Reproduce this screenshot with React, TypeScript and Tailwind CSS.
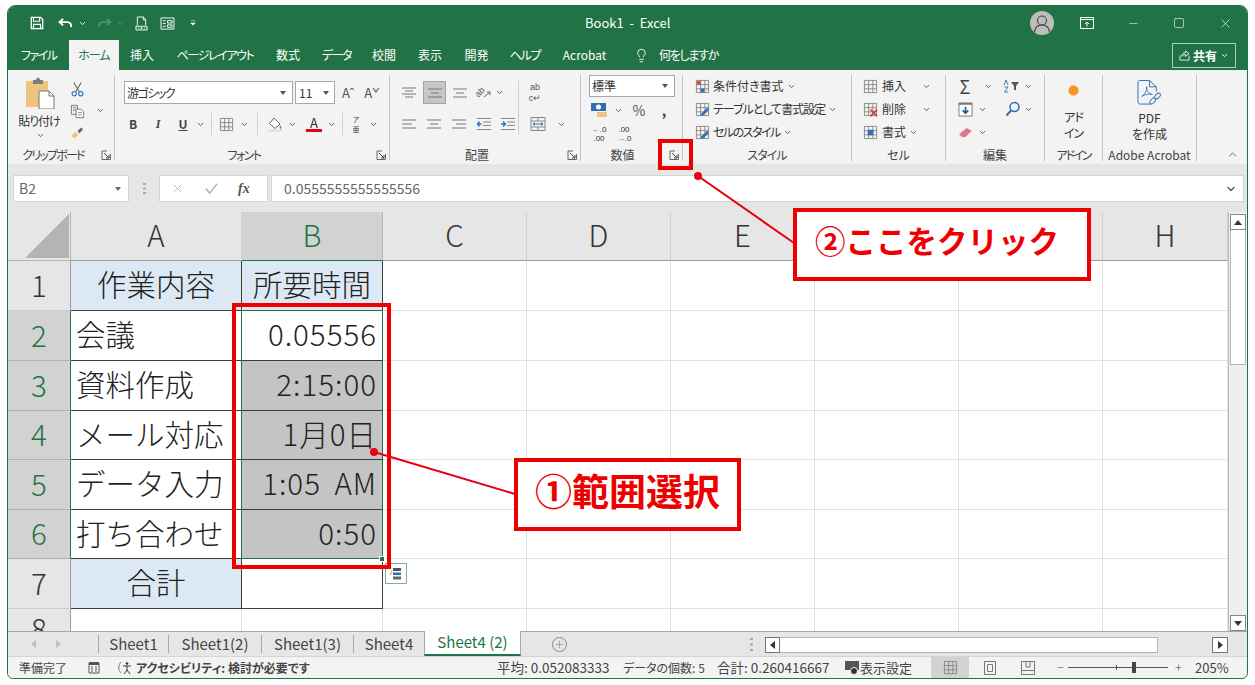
import { ChevronDown, ChevronUp, Lightbulb, Minus, Plus, Square, X } from "lucide-react";
import type { ReactNode } from "react";

function Chev({ className = "text-[#555]" }: { className?: string }) {
  return <ChevronDown className={`w-[9px] h-[9px] shrink-0 ${className}`} strokeWidth={2.5} />;
}

function Launcher() {
  return (
    <svg viewBox="0 0 10 10" className="w-[10px] h-[10px] shrink-0">
      <path d="M9.5 4V9.5H1V1H6" fill="none" stroke="#666" />
      <path d="M3 3L8 8M8 5V8H5" fill="none" stroke="#444" />
    </svg>
  );
}

function Box({ w, children, className = "" }: { w: string; children?: ReactNode; className?: string }) {
  return <div className={`flex items-center justify-center shrink-0 ${w} ${className}`}>{children}</div>;
}

function Sep() {
  return <div className="w-px h-[22px] bg-[#d0d0d0] shrink-0" />;
}

function AlignIcon({ kind, lines = 3 }: { kind: "c" | "l" | "r"; lines?: number }) {
  const ys = lines === 3 ? [3, 7, 11] : [2, 5, 8, 11];
  return (
    <svg viewBox="0 0 16 14" className="w-[16px] h-[14px]">
      {ys.map((y, i) => {
        const short = i % 2 === 1;
        const x1 = kind === "l" ? 1 : short ? 4 : 1;
        const x2 = kind === "r" ? 15 : kind === "l" ? (short ? 11 : 15) : short ? 12 : 15;
        const xa = kind === "r" && short ? 5 : x1;
        return <path key={y} d={`M${xa} ${y}H${x2}`} stroke="#777" strokeWidth="1" />;
      })}
    </svg>
  );
}

function RibbonGroup({ w, label, launcher, children, labelClass = "" }: { w: string; label: string; launcher?: boolean; children: ReactNode; labelClass?: string }) {
  return (
    <div className={`flex flex-col shrink-0 h-[86px] border-r border-[#c4c4c4] ${w}`}>
      <div className="h-[72px] flex">{children}</div>
      <div className="flex-1 flex items-center relative pt-[1px]">
        <span className={`flex-1 text-center text-[12px] text-[#444] leading-none ${labelClass}`}>{label}</span>
        {launcher && (
          <span className="absolute right-[3px] top-[3px]">
            <Launcher />
          </span>
        )}
      </div>
    </div>
  );
}

function TitleBar() {
  return (
    <div className="h-[34px] bg-[#217346] flex items-center text-white relative shrink-0">
      <Box w="w-[21px]" className="ml-[18px]">
        <svg viewBox="0 0 16 16" className="w-[14px] h-[14px]">
          <path d="M1.5 1.5H12L14.5 4V14.5H1.5Z" fill="none" stroke="#fff" strokeWidth="1.5" />
          <path d="M4 1.5V6H11V1.5M4 14.5V9.5H12V14.5" fill="none" stroke="#fff" strokeWidth="1.3" />
        </svg>
      </Box>
      <Box w="w-[20px]" className="ml-[8px]">
        <svg viewBox="0 0 16 14" className="w-[15px] h-[13px]">
          <path d="M5.5 2L1.5 5.5L5.5 9M2 5.5H10C13 5.5 14.5 7.5 14 11" fill="none" stroke="#fff" strokeWidth="2" />
        </svg>
      </Box>
      <Box w="w-[10px]" className="ml-[2px]">
        <Chev className="text-white" />
      </Box>
      <Box w="w-[20px]" className="ml-[7px]">
        <svg viewBox="0 0 16 14" className="w-[15px] h-[13px]">
          <path d="M10.5 2L14.5 5.5L10.5 9M14 5.5H6C3 5.5 1.5 7.5 2 11" fill="none" stroke="#4f9470" strokeWidth="2" />
        </svg>
      </Box>
      <Box w="w-[10px]" className="ml-[1px]">
        <Chev className="text-[#4f9470]" />
      </Box>
      <Box w="w-[16px]" className="ml-[8px]">
        <svg viewBox="0 0 14 16" className="w-[13px] h-[15px]">
          <path d="M2.5 10V1H9L11.5 3.5V10M9 1V4H11.5" fill="none" stroke="#fff" />
          <path d="M1 11H13V15H1Z" fill="none" stroke="#fff" />
          <circle cx="7" cy="13" r="1" fill="#fff" />
          <path d="M3 13H4.5M9.5 13H11" stroke="#fff" />
        </svg>
      </Box>
      <Box w="w-[16px]" className="ml-[10px]">
        <svg viewBox="0 0 16 14" className="w-[15px] h-[13px]">
          <path d="M1 1H15V13H1Z" fill="none" stroke="#fff" />
          <path d="M3 4H6M3 7H6M3 10H6M8 4H13V6.5H8ZM8 8.5H13V11H8Z" fill="none" stroke="#fff" />
        </svg>
      </Box>
      <Box w="w-[8px]" className="ml-[14px]">
        <svg viewBox="0 0 8 8" className="w-[6px] h-[6px]">
          <path d="M1 1H7M1 4H7L4 7Z" fill="#fff" stroke="#fff" strokeWidth="0.7" />
        </svg>
      </Box>
      <span className="absolute left-[577px] top-[10px] text-[13px] leading-none whitespace-pre">Book1  -  Excel</span>
      <div className="ml-auto flex items-center mr-[14px]">
        <div className="w-[24px] h-[24px] rounded-full bg-[#bdbdbd] flex items-center justify-center overflow-hidden">
          <svg viewBox="0 0 24 24" className="w-[24px] h-[24px]">
            <circle cx="12" cy="9.5" r="4.5" fill="none" stroke="#444" strokeWidth="1.1" />
            <path d="M4.5 21C5 16.5 8 14 12 14S19 16.5 19.5 21" fill="none" stroke="#444" strokeWidth="1.1" />
          </svg>
        </div>
        <Box w="w-[16px]" className="ml-[25px]">
          <svg viewBox="0 0 14 12" className="w-[14px] h-[12px]">
            <path d="M0.5 0.5H13.5V11.5H0.5ZM0.5 2.5H13.5" fill="none" stroke="#fff" />
            <path d="M7 9.5V5M5 7L7 5L9 7" fill="none" stroke="#fff" />
          </svg>
        </Box>
        <Box w="w-[16px]" className="ml-[30px]">
          <Minus className="w-[13px] h-[13px]" strokeWidth={1} />
        </Box>
        <Box w="w-[16px]" className="ml-[30px]">
          <Square className="w-[12px] h-[12px]" strokeWidth={1.2} />
        </Box>
        <Box w="w-[16px]" className="ml-[30px]">
          <X className="w-[15px] h-[15px]" strokeWidth={1} />
        </Box>
      </div>
    </div>
  );
}

function TabsBar() {
  const tabs = [
    ["挿入", "ml-[11px] w-[24px]"],
    ["ページレイアウト", "ml-[22px] w-[78px] tracking-[-1.4px]"],
    ["数式", "ml-[22px] w-[24px]"],
    ["データ", "ml-[22px] w-[29px] tracking-[-1.5px]"],
    ["校閲", "ml-[21px] w-[24px]"],
    ["表示", "ml-[22px] w-[24px]"],
    ["開発", "ml-[22px] w-[25px]"],
    ["ヘルプ", "ml-[21px] w-[30px] tracking-[-1.2px]"],
    ["Acrobat", "ml-[22px] w-[45px]"],
  ];
  return (
    <div className="h-[30px] bg-[#217346] flex items-stretch text-white text-[12px] shrink-0">
      <span className="ml-[13px] w-[34px] flex items-center whitespace-nowrap tracking-[-1.5px]">ファイル</span>
      <span className="ml-[14px] w-[50px] bg-[#f3f3f3] text-[#217346] flex items-center justify-center whitespace-nowrap tracking-[-1px]">ホーム</span>
      {tabs.map(([t, c]) => (
        <span key={t} className={`${c} flex items-center justify-center whitespace-nowrap`}>
          {t}
        </span>
      ))}
      <Box w="w-[16px]" className="ml-[26px]">
        <Lightbulb className="w-[15px] h-[15px]" strokeWidth={1.4} />
      </Box>
      <span className="ml-[10px] flex items-center whitespace-nowrap tracking-[-1.3px]">何をしますか</span>
      <div className="ml-auto mr-[11px] mt-[3px] mb-[2px] w-[64px] border border-[#a9cdb9] flex items-center justify-center gap-[3px]">
        <svg viewBox="0 0 12 12" className="w-[11px] h-[11px]">
          <path d="M1 6V11H11V6M3 7C3 4 5 3 7 3V1L11 4L7 7V5C5 5 4 6 3 7Z" fill="none" stroke="#fff" strokeWidth="0.9" />
        </svg>
        <span className="text-[12px] font-bold">共有</span>
        <Chev className="text-white" />
      </div>
    </div>
  );
}

function SmallGrid({ children }: { children?: ReactNode }) {
  return (
    <svg viewBox="0 0 16 16" className="w-[15px] h-[15px]">
      <path d="M1.5 1.5H14.5V14.5H1.5ZM1.5 6H14.5M1.5 10.5H14.5M6 1.5V14.5M10.5 1.5V14.5" fill="none" stroke="#888" />
      {children}
    </svg>
  );
}

function Ribbon() {
  return (
    <div className="h-[94px] bg-[#f3f3f3] flex pt-[5px] text-[#333] shrink-0">
      <RibbonGroup w="w-[107px]" label="クリップボード" launcher labelClass="pr-[16px] tracking-[-1.8px]">
        <div className="w-[62px] flex flex-col items-center pt-[2px] pl-[2px]">
          <svg viewBox="0 0 30 32" className="w-[30px] h-[32px]">
            <path d="M1 4H23V30H1Z" fill="#eec57c" />
            <path d="M8 3H11C11 0 15 0 15 3H18V7H8Z" fill="#7d7d7d" />
            <path d="M14 14H24L29 19V32H14Z" fill="#fff" stroke="#777" />
            <path d="M24 14V19H29" fill="none" stroke="#777" />
          </svg>
          <span className="text-[12px] mt-[6px] leading-none whitespace-nowrap tracking-[-1px] mr-[2px]">貼り付け</span>
          <Chev className="mt-[4px] text-[#555]" />
        </div>
        <div className="w-[15px] flex flex-col items-center gap-[7px] pt-[6px]">
          <svg viewBox="0 0 16 16" className="w-[15px] h-[16px]">
            <path d="M4 1L10 11M12 1L6 11" stroke="#666" strokeWidth="1.2" fill="none" />
            <circle cx="4.5" cy="13" r="2.3" fill="none" stroke="#2f6fb3" strokeWidth="1.2" />
            <circle cx="11.5" cy="13" r="2.3" fill="none" stroke="#2f6fb3" strokeWidth="1.2" />
          </svg>
          <svg viewBox="0 0 16 16" className="w-[15px] h-[15px]">
            <path d="M1.5 1.5H8V11H1.5ZM3 4H6.5M3 6.5H6.5" fill="none" stroke="#777" />
            <path d="M6.5 5.5H11.5L14.5 8V14.5H6.5Z" fill="#fff" stroke="#777" />
            <path d="M8.5 9H12.5M8.5 11.5H12.5" stroke="#888" />
          </svg>
          <svg viewBox="0 0 16 14" className="w-[15px] h-[13px]">
            <path d="M1 11L6 6L9 10L5 13Z" fill="#eec57c" />
            <path d="M8 5L12 1.5L14 3.5L10 8Z" fill="#666" />
          </svg>
        </div>
        <div className="pt-[31px] ml-[11px]">
          <Chev />
        </div>
      </RibbonGroup>

      <RibbonGroup w="w-[275px]" label="フォント" launcher labelClass="pr-[16px] tracking-[-1.5px]">
        <div className="flex flex-col pl-[9px] pt-[6px]">
          <div className="flex items-center h-[23px]">
            <div className="w-[169px] h-[23px] border border-[#a8a8a8] bg-white flex items-center justify-between pl-[2px] pr-[6px] text-[12px]">
              <span className="tracking-[-1.5px]">游ゴシック</span>
              <svg viewBox="0 0 6 4" className="w-[6px] h-[4px]"><path d="M0 0H6L3 4Z" fill="#555" /></svg>
            </div>
            <div className="w-[40px] ml-[2px] h-[23px] border border-[#a8a8a8] bg-white flex items-center justify-between pl-[3px] pr-[5px] text-[12px]">
              <span>11</span>
              <svg viewBox="0 0 6 4" className="w-[6px] h-[4px]"><path d="M0 0H6L3 4Z" fill="#555" /></svg>
            </div>
            <span className="ml-[5px] w-[16px] text-[13px] text-[#555] text-center">Aˆ</span>
            <span className="ml-[8px] w-[16px] text-[13px] text-[#555] text-center">Aˇ</span>
          </div>
          <div className="flex items-center h-[22px] mt-[9px] text-[12px] font-bold text-[#444]">
            <Box w="w-[18px]">B</Box>
            <Box w="w-[18px]" className="ml-[7px] italic font-['Liberation_Serif']">I</Box>
            <Box w="w-[18px]" className="ml-[7px] underline">U</Box>
            <Box w="w-[10px]" className="ml-[3px]"><Chev /></Box>
            <Box w="w-[12px]"><Sep /></Box>
            <Box w="w-[18px]"><SmallGrid /></Box>
            <Box w="w-[10px]" className="ml-[4px]"><Chev /></Box>
            <Box w="w-[13px]" className="ml-[2px]"><Sep /></Box>
            <Box w="w-[18px]" className="ml-[2px]">
              <svg viewBox="0 0 16 16" className="w-[16px] h-[16px]">
                <path d="M7 2L13 8L8 12.5L2.5 7.5Z" fill="#fff" stroke="#666" />
                <path d="M13 9C14.5 11 15 12 13.8 13C12.5 13 12.5 11 13 9Z" fill="#4a90c8" />
                <path d="M1 14.5H15" stroke="#cfe1f0" strokeWidth="2" />
              </svg>
            </Box>
            <Box w="w-[10px]" className="ml-[3px]"><Chev /></Box>
            <Box w="w-[18px]" className="ml-[8px] flex-col text-[#333] leading-none">
              <span className="text-[13px] font-normal">A</span>
              <span className="w-[16px] h-[3px] bg-[#e60012]" />
            </Box>
            <Box w="w-[10px]" className="ml-[3px]"><Chev /></Box>
            <Box w="w-[12px]"><Sep /></Box>
            <Box w="w-[14px]" className="ml-[1px] text-[7px] font-normal flex-col leading-[10.5px]">
              <span>ア</span>
              <span>亜</span>
            </Box>
            <Box w="w-[10px]" className="ml-[5px]"><Chev /></Box>
          </div>
        </div>
      </RibbonGroup>

      <RibbonGroup w="w-[191px]" label="配置" launcher labelClass="pr-[16px]">
        <div className="flex flex-col pl-[11px] pt-[6px]">
          <div className="flex items-center h-[23px]">
            <Box w="w-[16px]"><AlignIcon kind="c" lines={2} /></Box>
            <Box w="w-[23px] h-[23px] bg-[#c6c6c6] border border-[#a5a5a5]" className="ml-[6px]"><AlignIcon kind="c" /></Box>
            <Box w="w-[16px]" className="ml-[6px]"><AlignIcon kind="c" /></Box>
            <Box w="w-[18px]" className="ml-[6px]">
              <span className="text-[9px] leading-none text-[#555] -rotate-45 font-['Liberation_Sans']">ab</span>
              <svg viewBox="0 0 8 8" className="w-[8px] h-[8px] -ml-[2px] mt-[2px]"><path d="M1 7L7 2M4 2H7V5" fill="none" stroke="#666" /></svg>
            </Box>
            <Box w="w-[10px]" className="ml-[2px]"><Chev /></Box>
            <div className="w-px h-[54px] self-start bg-[#d0d0d0] ml-[14px]" />
            <Box w="w-[16px]" className="ml-[8px] flex-col leading-[10.5px] text-[9px] text-[#555] font-['Liberation_Sans']">
              <span>ab</span>
              <span>c↵</span>
            </Box>
          </div>
          <div className="flex items-center h-[22px] mt-[9px]">
            <Box w="w-[16px]"><AlignIcon kind="l" /></Box>
            <Box w="w-[16px]" className="ml-[9px]"><AlignIcon kind="c" /></Box>
            <Box w="w-[16px]" className="ml-[9px]"><AlignIcon kind="r" /></Box>
            <Box w="w-[16px]" className="ml-[9px]">
              <svg viewBox="0 0 16 14" className="w-[16px] h-[14px]">
                <path d="M1 1.5H15M7 5H15M7 8.5H15M1 12.5H15" stroke="#888" />
                <path d="M5.5 7H1.5M3.5 4.5L1.5 7L3.5 9.5" fill="none" stroke="#2f6fb3" strokeWidth="1.3" />
              </svg>
            </Box>
            <Box w="w-[16px]" className="ml-[8px]">
              <svg viewBox="0 0 16 14" className="w-[16px] h-[14px]">
                <path d="M1 1.5H15M7 5H15M7 8.5H15M1 12.5H15" stroke="#888" />
                <path d="M1 7H5M3 4.5L5.5 7L3 9.5" fill="none" stroke="#2f6fb3" strokeWidth="1.3" />
              </svg>
            </Box>
            <Box w="w-[16px]" className="ml-[14px]">
              <svg viewBox="0 0 16 16" className="w-[16px] h-[16px]">
                <path d="M1 1.5H15V14.5H1ZM1 5H15M1 11H15M8 1.5V5M8 11V14.5" fill="none" stroke="#888" />
                <path d="M3 8H13M5 6.5L3 8L5 9.5M11 6.5L13 8L11 9.5" fill="none" stroke="#2f6fb3" />
              </svg>
            </Box>
            <Box w="w-[10px]" className="ml-[10px]"><Chev /></Box>
          </div>
        </div>
      </RibbonGroup>

      <RibbonGroup w="w-[102px]" label="数値" launcher labelClass="pr-[18px]">
        <div className="flex flex-col pl-[8px]">
          <div className="w-[86px] h-[22px] border border-[#a8a8a8] bg-white flex items-center justify-between pl-[2px] pr-[6px] text-[12px]">
            <span>標準</span>
            <svg viewBox="0 0 6 4" className="w-[6px] h-[4px]"><path d="M0 0H6L3 4Z" fill="#555" /></svg>
          </div>
          <div className="flex items-center h-[20px] mt-[3px]">
            <Box w="w-[20px]">
              <svg viewBox="0 0 18 16" className="w-[18px] h-[16px]">
                <path d="M1 1H16V9H1Z" fill="#2f6fb3" />
                <circle cx="8.5" cy="5" r="2.5" fill="#fff" />
                <path d="M7 10H17V15H7Z" fill="#eec57c" />
              </svg>
            </Box>
            <Box w="w-[10px]" className="ml-[4px]"><Chev /></Box>
            <Box w="w-[16px]" className="ml-[8px] text-[14px] text-[#555]">%</Box>
            <Box w="w-[10px]" className="ml-[12px] text-[14px] font-bold text-[#444]">,</Box>
          </div>
          <div className="flex items-center h-[20px] mt-[4px] text-[8px] leading-[9.5px] font-['Liberation_Sans']">
            <Box w="w-[20px]" className="flex-col"><span><span className="text-[#2f6fb3]">←</span>.0</span><span>.00</span></Box>
            <Box w="w-[20px]" className="ml-[5px] flex-col"><span>.00</span><span><span className="text-[#2f6fb3]">→</span>.0</span></Box>
          </div>
        </div>
      </RibbonGroup>

      <RibbonGroup w="w-[169px]" label="スタイル" labelClass="tracking-[-1px]">
        <div className="flex flex-col pl-[12px] pt-[1px] text-[12px] whitespace-nowrap">
          <div className="flex items-center h-[20px] gap-[3px]">
            <SmallGrid><path d="M2 2H6V6H2Z" fill="#c9504a" /><path d="M6 10H10V14H6Z" fill="#2f6fb3" /></SmallGrid>
            <span>条件付き書式</span><Chev />
          </div>
          <div className="flex items-center h-[20px] gap-[3px] mt-[3px]">
            <SmallGrid><path d="M6 13L13 6L15 8L8 15Z" fill="#2f6fb3" /></SmallGrid>
            <span className="tracking-[-1px]">テーブルとして書式設定</span><Chev />
          </div>
          <div className="flex items-center h-[20px] gap-[3px] mt-[3px]">
            <SmallGrid><path d="M6 13L13 6L15 8L8 15Z" fill="#2f6fb3" /></SmallGrid>
            <span className="tracking-[-1.5px]">セルのスタイル</span><Chev />
          </div>
        </div>
      </RibbonGroup>

      <RibbonGroup w="w-[94px]" label="セル">
        <div className="flex flex-col pl-[11px] pt-[1px] text-[12px] whitespace-nowrap">
          <div className="flex items-center h-[20px]">
            <SmallGrid />
            <span className="ml-[4px] w-[40px]">挿入</span><Chev />
          </div>
          <div className="flex items-center h-[20px] mt-[3px]">
            <SmallGrid><path d="M8 8L15 15M15 8L8 15" stroke="#d9392f" strokeWidth="1.8" /></SmallGrid>
            <span className="ml-[4px] w-[40px]">削除</span><Chev />
          </div>
          <div className="flex items-center h-[20px] mt-[3px]">
            <SmallGrid><path d="M5 5H11V11H5Z" fill="#2f6fb3" /></SmallGrid>
            <span className="ml-[4px] mr-[3px]">書式</span><Chev />
          </div>
        </div>
      </RibbonGroup>

      <RibbonGroup w="w-[99px]" label="編集">
        <div className="flex flex-col pl-[11px] pt-[1px]">
          <div className="flex items-center h-[20px]">
            <Box w="w-[16px]" className="text-[18px] text-[#444] leading-none">Σ</Box>
            <Box w="w-[10px]" className="ml-[10px]"><Chev /></Box>
            <Box w="w-[18px]" className="ml-[10px]">
              <svg viewBox="0 0 18 14" className="w-[18px] h-[14px]">
                <path d="M1 6L3 1L5 6M1.5 8H5L1.5 13H5" fill="none" stroke="#2f6fb3" strokeWidth="0.9" />
                <path d="M8 3H16L13 7V11H11V7Z" fill="#555" />
              </svg>
            </Box>
            <Box w="w-[10px]" className="ml-[2px]"><Chev /></Box>
          </div>
          <div className="flex items-center h-[20px] mt-[3px]">
            <Box w="w-[16px]">
              <svg viewBox="0 0 16 16" className="w-[15px] h-[15px]">
                <path d="M1 1H15V15H1Z" fill="#fff" stroke="#777" />
                <path d="M1 1H15V3H1Z" fill="#777" />
                <path d="M8 5V12M5 9L8 12L11 9" fill="none" stroke="#1f5f9e" strokeWidth="1.8" />
              </svg>
            </Box>
            <Box w="w-[10px]" className="ml-[4px]"><Chev /></Box>
            <Box w="w-[18px]" className="ml-[17px]">
              <svg viewBox="0 0 16 16" className="w-[16px] h-[16px]">
                <circle cx="9.5" cy="6" r="4.5" fill="none" stroke="#2f6fb3" strokeWidth="1.5" />
                <path d="M6 9.5L1.5 14.5" stroke="#2f6fb3" strokeWidth="2" />
              </svg>
            </Box>
            <Box w="w-[10px]" className="ml-[1px]"><Chev /></Box>
          </div>
          <div className="flex items-center h-[20px] mt-[3px]">
            <Box w="w-[16px]">
              <svg viewBox="0 0 16 12" className="w-[15px] h-[11px]">
                <path d="M1 8L9 1L15 4L8 11H4Z" fill="#e0788c" />
              </svg>
            </Box>
            <Box w="w-[10px]" className="ml-[4px]"><Chev /></Box>
          </div>
        </div>
      </RibbonGroup>

      <RibbonGroup w="w-[58px]" label="アドイン" labelClass="tracking-[-2px]">
        <div className="flex-1 flex flex-col items-center pt-[10px] text-[12px] tracking-[-1px]">
          <div className="w-[11px] h-[11px] rounded-full bg-[#f7941d] border border-[#fbc583]" />
          <span className="mt-[13px] leading-[16px]">アド</span>
          <span className="leading-[16px]">イン</span>
        </div>
      </RibbonGroup>

      <RibbonGroup w="w-[94px]" label="Adobe Acrobat" labelClass="text-[12.5px]">
        <div className="flex-1 flex flex-col items-center pt-[5px] text-[12px]">
          <svg viewBox="0 0 26 28" className="w-[25px] h-[27px]">
            <path d="M15 25H3C2 25 1 24 1 23V2C1 1 2 0.5 3 0.5H13L20 7V12M13 0.5V7H20" fill="none" stroke="#2f6fb3" />
            <path d="M5 17C8 15 11 10 10 7C9 10 13 15 16 15C13 14 8 15 5 17Z" fill="none" stroke="#2f6fb3" strokeWidth="0.9" />
            <rect x="13" y="20" width="7" height="4" rx="2" transform="rotate(-45 16 22)" fill="none" stroke="#2f6fb3" />
            <rect x="18" y="15" width="7" height="4" rx="2" transform="rotate(-45 21 17)" fill="none" stroke="#2f6fb3" />
          </svg>
          <span className="mt-[3px] leading-[16px]">PDF</span>
          <span className="leading-[16px]">を作成</span>
        </div>
      </RibbonGroup>

      <div className="flex-1 flex items-end justify-end pr-[8px] pb-[3px]">
        <ChevronUp className="w-[13px] h-[13px] text-[#555]" strokeWidth={1.5} />
      </div>
    </div>
  );
}

function FormulaBar() {
  return (
    <div className="h-[48px] bg-[#e6e6e6] flex items-start pt-[11px] pl-[5px] pr-[3px] shrink-0">
      <div className="w-[116px] h-[27px] bg-white border border-[#d4d4d4] flex items-center justify-between pl-[5px] pr-[7px] text-[14px] text-[#666]">
        <span>B2</span>
        <svg viewBox="0 0 6 4" className="w-[6px] h-[4px]"><path d="M0 0H6L3 4Z" fill="#666" /></svg>
      </div>
      <div className="w-[30px] h-[27px] flex items-center justify-center">
        <svg viewBox="0 0 3 11" className="w-[3px] h-[11px]"><path d="M0 0H3V2H0ZM0 4.5H3V6.5H0ZM0 9H3V11H0Z" fill="#aaa" /></svg>
      </div>
      <div className="w-[109px] h-[27px] bg-white border border-[#d4d4d4] flex items-center text-[#b0b0b0]">
        <X className="ml-[10px] w-[15px] h-[15px]" strokeWidth={1.3} />
        <svg viewBox="0 0 16 16" className="ml-[19px] w-[15px] h-[15px]"><path d="M2 8L6 13L14 3" fill="none" stroke="#b0b0b0" strokeWidth="1.5" /></svg>
        <span className="ml-[19px] text-[14px] italic text-[#555] font-bold font-['Liberation_Serif']">fx</span>
      </div>
      <div className="ml-[3px] flex-1 h-[27px] bg-white border border-[#d4d4d4] flex items-center pl-[12px] pr-[6px] text-[14px] text-[#666]">
        <span>0.0555555555555556</span>
        <ChevronDown className="ml-auto w-[12px] h-[12px] text-[#555]" strokeWidth={2.5} />
      </div>
    </div>
  );
}

const grid = "border-r border-b border-[#e2e2e2]";
const tableCell = "border-r border-b border-[#3d3d3d]";
const rows = [
  { n: 1, a: "作業内容", b: "所要時間", head: true },
  { n: 2, a: "会議", b: "0.05556", on: true },
  { n: 3, a: "資料作成", b: "2:15:00", on: true, gray: true },
  { n: 4, a: "メール対応", b: "1月0日", on: true, gray: true },
  { n: 5, a: "データ入力", b: "1:05 AM", on: true, gray: true },
  { n: 6, a: "打ち合わせ", b: "0:50", on: true, gray: true },
  { n: 7, a: "合計", b: "", total: true },
  { n: 8, a: "", b: "" },
];
const blanks = ["C", "D", "E", "F", "G", "H"];
// F and G sit behind the callout in the screenshot
const heads = ["A", "B", "C", "D", "E", "", "", "H"];

function Sheet() {
  return (
    <div className="h-[419px] flex shrink-0">
      <div className="relative w-[1220px] overflow-hidden">
        <div className="grid grid-cols-[63px_171px_141px_144px_144px_144px_144px_144px_125px] grid-rows-[49px_50px_50px_50px_49px_50px_49px_50px_40px] h-[437px] text-[29.5px] font-light leading-none text-[#222] [font-feature-settings:normal]">
          <div className="bg-[#e6e6e6] border-r border-b border-[#b5b5b5] flex items-end justify-end p-[2px] pr-[1px]">
            <svg viewBox="0 0 44 44" className="w-[44px] h-[44px]"><path d="M44 0V44H0Z" fill="#b4b4b4" /></svg>
          </div>
          {heads.map((c, i) => (
            <div
              key={i}
              className={`flex items-center justify-center pb-[2px] border-r border-b ${
                c === "B" ? "bg-[#d2d2d2] text-[#217346] border-[#b5b5b5] border-b-[#217346]" : "bg-[#e6e6e6] text-[#333] border-[#cfcfcf] border-b-[#9c9c9c]"
              }`}
            >
              {c}
            </div>
          ))}
          {rows.map((r) => (
            <div key={r.n} className="contents">
              <div
                className={`flex items-center justify-center pb-[2px] border-r border-b ${
                  r.on ? "bg-[#d2d2d2] text-[#217346] border-[#b0b0b0] border-r-[#217346]" : "bg-[#e6e6e6] text-[#333] border-[#cfcfcf] border-r-[#9c9c9c]"
                }`}
              >
                {r.n}
              </div>
              <div
                className={`flex items-center whitespace-nowrap overflow-hidden pb-[3px] ${r.n === 8 ? grid : tableCell} ${
                  r.head || r.total ? "bg-[#dce9f5] justify-center" : "pl-[5px]"
                }`}
              >
                {r.a}
              </div>
              <div
                className={`flex items-center whitespace-pre pb-[3px] ${r.n === 8 ? grid : tableCell} ${r.gray ? "bg-[#c4c4c4]" : ""} ${
                  r.head ? "bg-[#dce9f5] justify-center" : "justify-end pr-[5px] tracking-[1px] [word-spacing:6px]"
                }`}
              >
                {r.b}
              </div>
              {blanks.map((c) => (
                <div key={c} className={grid} />
              ))}
            </div>
          ))}
        </div>
        {/* selection over B2:B6 */}
        <div className="absolute left-[233px] top-[98px] w-[142px] h-[249px] border-[1.5px] border-[#217346]" />
        <div className="absolute left-[371px] top-[344px] w-[6px] h-[6px] bg-[#217346] border border-white" />
        <div className="absolute left-[377px] top-[351px] w-[22px] h-[21px] bg-white border border-[#7fae95] flex items-center justify-center">
          <svg viewBox="0 0 14 14" className="w-[14px] h-[14px]">
            <path d="M4 1H12V4H4Z" fill="#555" />
            <path d="M4 5.5H12V8H4Z" fill="#2f6fb3" />
            <path d="M4 9.5H12V12.5H4Z" fill="#666" />
            <path d="M1 8L3 4" stroke="#e8a33d" strokeWidth="1.2" />
          </svg>
        </div>
      </div>
      <div className="flex-1 bg-[#efefef] border-l border-[#bdbdbd] flex flex-col items-stretch pt-[2px] pl-[1px] pr-[1px]">
        <div className="h-[16px] bg-white border border-[#888] flex items-center justify-center">
          <svg viewBox="0 0 8 5" className="w-[8px] h-[5px]"><path d="M4 0L8 5H0Z" fill="#333" /></svg>
        </div>
        <div className="h-[135px] bg-white border border-[#b5b5b5] border-t-0" />
        <div className="mt-auto h-[16px] bg-white border border-[#888] flex items-center justify-center">
          <svg viewBox="0 0 8 5" className="w-[8px] h-[5px]"><path d="M0 0H8L4 5Z" fill="#333" /></svg>
        </div>
      </div>
    </div>
  );
}

function SheetTabs() {
  const tabs = [
    ["Sheet1", "w-[70px]"],
    ["Sheet1(2)", "w-[93px]"],
    ["Sheet1(3)", "w-[92px]"],
    ["Sheet4", "w-[71px]"],
  ];
  return (
    <div className="h-[25px] bg-[#e6e6e6] border-t border-[#a8a8a8] flex items-stretch text-[15px] text-[#444] shrink-0">
      <div className="w-[90px] flex items-center">
        <svg viewBox="0 0 5 8" className="ml-[23px] w-[5px] h-[8px]"><path d="M5 0V8L0 4Z" fill="#c0c0c0" /></svg>
        <svg viewBox="0 0 5 8" className="ml-[20px] w-[5px] h-[8px]"><path d="M0 0V8L5 4Z" fill="#c0c0c0" /></svg>
      </div>
      {tabs.map(([t, w]) => (
        <div key={t} className={`${w} flex items-center justify-center my-[3px] border-l border-[#a8a8a8]`}>
          {t}
        </div>
      ))}
      <div className="w-[97px] -mt-px bg-white border-b-2 border-b-[#217346] border-l border-r border-[#a8a8a8] flex items-center justify-center text-[#217346] whitespace-pre">
        Sheet4 (2)
      </div>
      <div className="w-[76px] flex items-center justify-center">
        <div className="w-[15px] h-[15px] rounded-full border border-[#888] flex items-center justify-center">
          <Plus className="w-[11px] h-[11px] text-[#777]" strokeWidth={1.2} />
        </div>
      </div>
      <div className="ml-[139px] w-[30px] flex items-center justify-center">
        <svg viewBox="0 0 3 13" className="w-[3px] h-[13px]"><path d="M0 0H3V2H0ZM0 5.5H3V7.5H0ZM0 11H3V13H0Z" fill="#aaa" /></svg>
      </div>
      <div className="flex items-center h-[16px] mt-[5px] ml-[-1px]">
        <div className="w-[15px] h-[16px] bg-white border border-[#777] flex items-center justify-center">
          <svg viewBox="0 0 5 8" className="w-[5px] h-[8px]"><path d="M5 0V8L0 4Z" fill="#333" /></svg>
        </div>
        <div className="w-[378px] h-[16px] bg-white border border-l-0 border-[#b5b5b5]" />
        <div className="w-[54px]" />
        <div className="w-[16px] h-[16px] bg-white border border-[#777] flex items-center justify-center">
          <svg viewBox="0 0 5 8" className="w-[5px] h-[8px]"><path d="M0 0V8L5 4Z" fill="#333" /></svg>
        </div>
      </div>
    </div>
  );
}

function StatusBar() {
  return (
    <div className="h-[22px] bg-[#f3f3f3] border-t border-[#d4d4d4] rounded-b-[6px] flex items-center text-[13.5px] text-[#444] whitespace-nowrap shrink-0 overflow-hidden">
      <div className="w-[489px] flex items-center shrink-0 text-[12px]">
        <span className="ml-[11px] w-[48px]">準備完了</span>
        <Box w="w-[12px]" className="ml-[21px]">
          <svg viewBox="0 0 12 13" className="w-[12px] h-[13px]">
            <path d="M1 2H11V12H1Z" fill="none" stroke="#555" />
            <path d="M1 1H11V4H1Z" fill="#555" />
            <path d="M3 6H5M7 6H9M3 8H5M7 8H9M3 10H5M7 10H9" stroke="#555" />
          </svg>
        </Box>
        <Box w="w-[16px]" className="ml-[17px]">
          <svg viewBox="0 0 16 14" className="w-[16px] h-[14px]">
            <path d="M4 1C1 4 1 9 4 12" fill="none" stroke="#777" />
            <circle cx="10" cy="2.5" r="1.3" fill="#333" />
            <path d="M6 5H14M10 5V9M10 9L7 13M10 9L13 13" stroke="#333" fill="none" />
          </svg>
        </Box>
        <span className="ml-[3px] font-bold">アクセシビリティ: 検討が必要です</span>
      </div>
      <span className="w-[126px] shrink-0">平均: 0.052083333</span>
      <span className="w-[94px] shrink-0 text-[12px]">データの個数: 5</span>
      <span className="w-[128px] shrink-0">合計: 0.260416667</span>
      <div className="w-[86px] shrink-0 flex items-center gap-[1px]">
        <svg viewBox="0 0 14 14" className="w-[14px] h-[14px]">
          <path d="M0 0H14V9H0Z" fill="#555" />
          <circle cx="9" cy="10" r="3.5" fill="#333" stroke="#f3f3f3" />
        </svg>
        <span className="text-[13px]">表示設定</span>
      </div>
      <div className="w-[38px] h-[21px] shrink-0 bg-[#d2d2d2] flex items-center justify-center">
        <SmallGrid />
      </div>
      <svg viewBox="0 0 14 14" className="ml-[14px] w-[14px] h-[14px] shrink-0">
        <path d="M1.5 0.5H12.5V13.5H1.5ZM4.5 3.5H9.5V10.5H4.5Z" fill="none" stroke="#777" />
      </svg>
      <svg viewBox="0 0 14 14" className="ml-[24px] w-[14px] h-[14px] shrink-0">
        <path d="M0.5 0.5H13.5V13.5H0.5ZM0.5 9.5H13.5M5 0.5V6H9V0.5" fill="none" stroke="#777" />
      </svg>
      <div className="ml-[21px] w-[139px] shrink-0 flex items-center">
        <Minus className="w-[9px] h-[9px]" strokeWidth={1.5} />
        <div className="ml-[3px] w-[100px] h-px bg-[#555] relative">
          <span className="absolute left-[48px] -top-[2px] w-px h-[5px] bg-[#555]" />
          <span className="absolute left-[64px] -top-[5px] w-[4px] h-[11px] bg-[#444]" />
        </div>
        <Plus className="ml-[6px] w-[9px] h-[9px]" strokeWidth={1.5} />
      </div>
      <span className="text-[13px]">205%</span>
    </div>
  );
}

function Notes() {
  return (
    <>
      <svg viewBox="0 0 1255 685" className="absolute left-0 top-0 w-[1255px] h-[685px] pointer-events-none">
        <path d="M698 176L794 243M374 452L515 494" stroke="#e60012" strokeWidth="2" fill="none" />
        <circle cx="698" cy="176" r="4" fill="#e60012" />
        <circle cx="374" cy="452" r="4" fill="#e60012" />
      </svg>
      <div className="absolute left-[658px] top-[139px] w-[35px] h-[31px] border-[4px] border-[#ee0000]" />
      <div className="absolute left-[232px] top-[303px] w-[159px] h-[266px] border-[4px] border-[#ee0000]" />
      <div className="absolute left-[793px] top-[208px] w-[298px] h-[73px] border-[4px] border-[#ee0000] bg-white flex items-center pl-[18px] pb-[8px] text-[30.5px] font-bold text-[#ee0000] leading-none whitespace-nowrap [font-feature-settings:normal]">
        ②ここをクリック
      </div>
      <div className="absolute left-[514px] top-[458px] w-[227px] h-[73px] border-[4px] border-[#ee0000] bg-white flex items-center justify-center pb-[8px] text-[37px] font-bold text-[#ee0000] leading-none whitespace-nowrap [font-feature-settings:normal]">
        ①範囲選択
      </div>
    </>
  );
}

export default function App() {
  return (
    <div className="relative w-[1255px] h-[685px] bg-white overflow-hidden pl-[7px] pt-[5px] [font-feature-settings:'palt'] font-[family-name:'Noto_Sans_CJK_JP','Liberation_Sans',sans-serif]">
      <div className="relative w-[1241px] h-[674px] border border-[#217346] rounded-t-[8px] rounded-b-[6px] overflow-hidden flex flex-col bg-white">
        <TitleBar />
        <TabsBar />
        <Ribbon />
        <FormulaBar />
        <Sheet />
        <SheetTabs />
        <StatusBar />
      </div>
      <Notes />
    </div>
  );
}
